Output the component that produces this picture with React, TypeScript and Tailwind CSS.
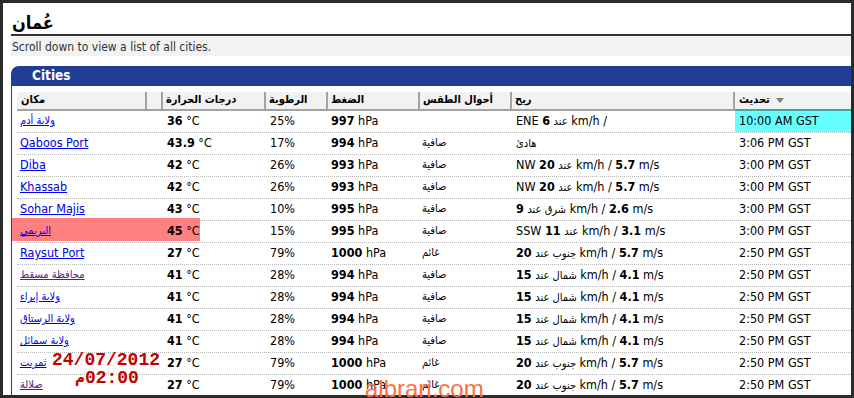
import React from "react";

const AR = ({ children }: { children: React.ReactNode }) => (
  <span className="text-[11px]">{children}</span>
);

type Row = {
  name: string;
  visited?: boolean;
  t: string;
  h: string;
  p: string;
  c: string;
  w: React.ReactNode;
  u: string;
  cyan?: boolean;
  pink?: boolean;
};

const N = (s: string) => <AR>{s}</AR>;

const shamal = (
  <>
    {N("شمال عند")} <b>15</b> km/h / <b>4.1</b> m/s
  </>
);
const janoob = (
  <>
    {N("جنوب عند")} <b>20</b> km/h / <b>5.7</b> m/s
  </>
);
const nw = (
  <>
    NW {N("عند")} <b>20</b> km/h / <b>5.7</b> m/s
  </>
);

const rows: Row[] = [
  { name: "ولاية أدم", t: "36", h: "25%", p: "997", c: "", w: <>ENE {N("عند")} <b>6</b> km/h /</>, u: "10:00 AM GST", cyan: true },
  { name: "Qaboos Port", t: "43.9", h: "17%", p: "994", c: "صافية", w: N("هادئ"), u: "3:06 PM GST" },
  { name: "Diba", t: "42", h: "26%", p: "993", c: "صافية", w: nw, u: "3:00 PM GST" },
  { name: "Khassab", t: "42", h: "26%", p: "993", c: "صافية", w: nw, u: "3:00 PM GST" },
  { name: "Sohar Majis", t: "43", h: "10%", p: "995", c: "صافية", w: <>{N("شرق عند")} <b>9</b> km/h / <b>2.6</b> m/s</>, u: "3:00 PM GST" },
  { name: "البريمي", t: "45", h: "15%", p: "995", c: "صافية", w: <>SSW {N("عند")} <b>11</b> km/h / <b>3.1</b> m/s</>, u: "3:00 PM GST", pink: true },
  { name: "Raysut Port", t: "27", h: "79%", p: "1000", c: "غائم", w: janoob, u: "2:50 PM GST" },
  { name: "محافظة مسقط", visited: true, t: "41", h: "28%", p: "994", c: "صافية", w: shamal, u: "2:50 PM GST" },
  { name: "ولاية إبراء", t: "41", h: "28%", p: "994", c: "صافية", w: shamal, u: "2:50 PM GST" },
  { name: "ولاية الرستاق", t: "41", h: "28%", p: "994", c: "صافية", w: shamal, u: "2:50 PM GST" },
  { name: "ولاية سمائل", t: "41", h: "28%", p: "994", c: "صافية", w: shamal, u: "2:50 PM GST" },
  { name: "ثمريت", t: "27", h: "79%", p: "1000", c: "غائم", w: janoob, u: "2:50 PM GST" },
  { name: "صلالة", visited: true, t: "27", h: "79%", p: "1000", c: "غائم", w: janoob, u: "2:50 PM GST" },
];

const isArabic = (s: string) => /[\u0600-\u06FF]/.test(s);

export default function App() {
  return (
    <div className="relative w-[854px] h-[398px] overflow-hidden bg-[#2b2b2b] p-[3px] font-['DejaVu_Sans_Condensed','DejaVu_Sans',sans-serif] [font-stretch:condensed] text-black">
      <div className="w-[848px] h-[392px] overflow-hidden bg-white pl-[8px]">
        {/* Title */}
        <div className="h-[31px] flex items-end pl-[1px] pb-[2px]">
          <span className="text-[18px] font-bold leading-none">عُمان</span>
        </div>
        <div className="h-[2px] bg-[#333333]" />
        <div className="mt-[1px] h-[19px] bg-[#f2f2f2] flex items-center pl-[1px] text-[12px] text-[#333333]">
          Scroll down to view a list of all cities.
        </div>

        {/* Cities bar */}
        <div className="mt-[10px] h-[20px] bg-[#223f98] rounded-tl-[8px] flex items-center pl-[21px]">
          <span className="text-white font-bold text-[13.5px] leading-none">Cities</span>
        </div>

        {/* Table box */}
        <div className="border-l border-[#223f98] pt-[6px] pl-[5px]">
          {/* Header */}
          <div className="flex h-[19px] text-[11px] font-bold">
            <div className="w-[130px] bg-[#f2f2f2] border-b-2 border-b-[#a3a3a3] border-r-2 border-r-[#a3a3a3] pl-[4px] flex items-center">مكان</div>
            <div className="w-[16px] bg-[#f2f2f2] border-b-2 border-b-[#a3a3a3] border-r-2 border-r-[#a3a3a3]" />
            <div className="w-[103px] bg-[#f2f2f2] border-b-2 border-b-[#a3a3a3] border-r-2 border-r-[#a3a3a3] pl-[3px] flex items-center">درجات الحرارة</div>
            <div className="w-[62px] bg-[#f2f2f2] border-b-2 border-b-[#a3a3a3] border-r-2 border-r-[#a3a3a3] pl-[3px] flex items-center">الرطوبة</div>
            <div className="w-[92px] bg-[#f2f2f2] border-b-2 border-b-[#a3a3a3] border-r-2 border-r-[#a3a3a3] pl-[3px] flex items-center">الضغط</div>
            <div className="w-[92px] bg-[#f2f2f2] border-b-2 border-b-[#a3a3a3] border-r-2 border-r-[#a3a3a3] pl-[3px] flex items-center">أحوال الطقس</div>
            <div className="w-[223px] bg-[#f2f2f2] border-b-2 border-b-[#a3a3a3] border-r-2 border-r-[#a3a3a3] pl-[3px] flex items-center">ريح</div>
            <div className="flex-1 bg-[#f2f2f2] border-b-2 border-b-[#3fa9a9] pl-[4px] flex items-center gap-[6px]">
              <span>تحديث</span>
              <svg width="8" height="5" viewBox="0 0 8 5">
                <polygon points="0,0 8,0 4,5" fill="#7a7a7a" />
              </svg>
            </div>
          </div>

          {/* Rows */}
          {rows.map((r, i) => (
            <div key={i} className="relative flex h-[22px] border-b border-dotted border-[#b8b8b8] text-[12.5px]">
              {r.pink && <div className="absolute left-[-5px] top-[-3px] w-[188px] h-[23px] bg-[#ff8080]" />}
              <div className="relative w-[130px] pl-[3px] flex items-center">
                <a
                  href="#"
                  className={`underline ${r.visited ? "text-[#551a8b]" : "text-[#0000ee]"} ${isArabic(r.name) ? "text-[11px]" : ""}`}
                >
                  {r.name}
                </a>
              </div>
              <div className="w-[16px]" />
              <div className="relative w-[103px] pl-[4px] flex items-center whitespace-pre">
                <b>{r.t}</b> °C
              </div>
              <div className="w-[62px] pl-[4px] flex items-center">{r.h}</div>
              <div className="w-[92px] pl-[3px] flex items-center whitespace-pre">
                <b>{r.p}</b> hPa
              </div>
              <div className="w-[92px] pl-[2px] flex items-center text-[11px]">{r.c}</div>
              <div className="w-[223px] pl-[4px] flex items-center">
                <span className="whitespace-pre">{r.w}</span>
              </div>
              <div className={`flex-1 pl-[4px] flex items-center ${r.cyan ? "bg-[#66ffff]" : ""}`}>{r.u}</div>
            </div>
          ))}
        </div>
      </div>

      {/* Watermarks */}
      <div className="absolute left-[52px] top-[351px] font-['Liberation_Mono',monospace] font-bold text-[18px] leading-[18px] text-[#c40000]">
        24/07/2012
      </div>
      <div className="absolute left-[75px] top-[369px] flex items-baseline font-['Liberation_Mono','DejaVu_Sans_Mono',monospace] font-bold text-[18px] leading-[18px] text-[#c40000]">
        <span className="font-['DejaVu_Sans',sans-serif] text-[15px]">م</span>
        <span>02:00</span>
      </div>
      <div className="absolute left-[365px] top-[377px] font-['Liberation_Sans',sans-serif] text-[24px] leading-[24px] text-[#ff7040]">
        albrari.com
      </div>
    </div>
  );
}
